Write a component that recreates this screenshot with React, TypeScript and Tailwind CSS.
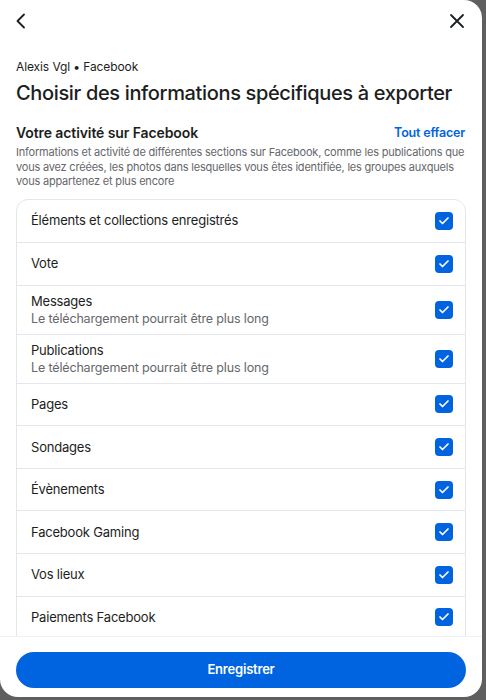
import { Check } from 'lucide-react'

const rows: { label: string; sub?: string }[] = [
  { label: 'Éléments et collections enregistrés' },
  { label: 'Vote' },
  { label: 'Messages', sub: 'Le téléchargement pourrait être plus long' },
  { label: 'Publications', sub: 'Le téléchargement pourrait être plus long' },
  { label: 'Pages' },
  { label: 'Sondages' },
  { label: 'Évènements' },
  { label: 'Facebook Gaming' },
  { label: 'Vos lieux' },
  { label: 'Paiements Facebook' },
]

export default function App() {
  return (
    <div
      className="w-[486px] h-[700px] bg-[#5f5f5f] overflow-hidden"
      style={{ fontFamily: 'Inter, Roboto, "Noto Sans", sans-serif' }}
    >
      <div className="w-[482px] h-[697px] bg-white rounded-tr-[18px] rounded-b-[18px] flex flex-col overflow-hidden">
        <div className="h-[40px] flex items-center justify-between pl-[15px] pr-[17px] pt-[1px] shrink-0">
          <svg width="12" height="16" viewBox="0 0 12 16" fill="none">
            <path d="M9 1.5 2.5 8 9 14.5" stroke="#1c1e21" strokeWidth="1.8" strokeLinecap="round" strokeLinejoin="round" />
          </svg>
          <svg width="16" height="16" viewBox="0 0 16 16" fill="none">
            <path d="M2 2l12 12M14 2 2 14" stroke="#1c1e21" strokeWidth="1.8" strokeLinecap="round" />
          </svg>
        </div>

        <div className="flex-1 overflow-hidden px-4">
          <div className="pt-[19px] text-[12px] leading-4 tracking-[-0.1px] text-[#1c1e21]">Alexis Vgl • Facebook</div>
          <h1 className="mt-[6px] text-[20px] leading-6 font-medium text-[#1c1e21] tracking-[-0.35px]">
            Choisir des informations spécifiques à exporter
          </h1>

          <div className="mt-[18px] flex items-center justify-between">
            <h2 className="text-[14px] leading-5 font-semibold tracking-[-0.1px] text-[#1c1e21]">
              Votre activité sur Facebook
            </h2>
            <span className="text-[12.5px] font-semibold tracking-[-0.2px] text-[#0064e0] pr-[1px]">Tout effacer</span>
          </div>
          <p className="mt-[2px] text-[11px] leading-[14.5px] tracking-[-0.2px] text-[#65676b]">
            Informations et activité de différentes sections sur Facebook, comme les publications que vous avez créées,
            les photos dans lesquelles vous êtes identifiée, les groupes auxquels vous appartenez et plus encore
          </p>

          <div className="mt-[10px] border border-[#e4e6eb] rounded-[12px]">
            {rows.map((r, i) => (
              <div
                key={r.label}
                className={`flex items-center justify-between pl-[14px] pr-[12px] ${
                  r.sub ? 'h-[49px]' : 'h-[42.6px]'
                } ${i > 0 ? 'border-t border-[#e4e6eb]' : ''}`}
              >
                <div className="flex flex-col">
                  <span className="text-[13px] leading-[17px] tracking-[-0.2px] text-[#1c1e21]">{r.label}</span>
                  {r.sub && (
                    <span className="text-[12.5px] leading-[17px] tracking-[-0.15px] text-[#65676b]">{r.sub}</span>
                  )}
                </div>
                <span className="w-[18px] h-[18px] rounded-[4px] bg-[#0064e0] flex items-center justify-center">
                  <Check className="w-[12px] h-[12px] text-white" strokeWidth={3.5} />
                </span>
              </div>
            ))}
            <div className="h-[43px] border-t border-[#e4e6eb]" />
          </div>
        </div>

        <div className="shrink-0 h-[61px] pt-[15px] px-4 border-t border-[#f0f1f3]">
          <button
            type="button"
            className="w-full h-[36px] rounded-full bg-[#0064e0] text-white text-[13px] tracking-[-0.2px] font-semibold"
          >
            Enregistrer
          </button>
        </div>
      </div>
    </div>
  )
}
